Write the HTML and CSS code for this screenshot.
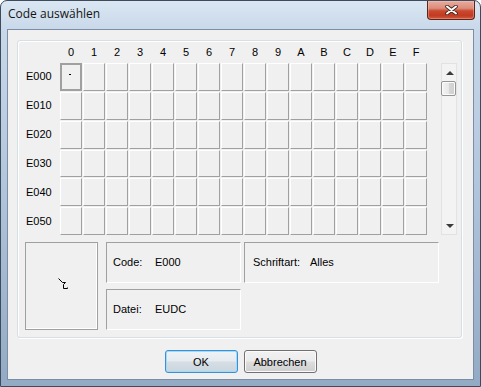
FILE: index.html
```html
<!DOCTYPE html>
<html lang="de">
<head>
<meta charset="utf-8">
<title>Code auswählen</title>
<link rel="stylesheet" href="styles.css">
</head>
<body>
<div class="window">
  <div class="titlebar">
    <span class="title">Code auswählen</span>
    <div class="close">
      <svg width="13" height="10" viewBox="0 0 13 10">
        <path d="M2 1.5 L11 8.5 M11 1.5 L2 8.5" stroke="#3b2620" stroke-width="3.6" stroke-linecap="round" fill="none"/>
        <path d="M2 1.5 L11 8.5 M11 1.5 L2 8.5" stroke="#ffffff" stroke-width="2" stroke-linecap="round" fill="none"/>
      </svg>
    </div>
  </div>
  <div class="client">
    <div class="group">
      <div class="chart">
        <div class="colhead">
          <span>0</span><span>1</span><span>2</span><span>3</span><span>4</span><span>5</span><span>6</span><span>7</span>
          <span>8</span><span>9</span><span>A</span><span>B</span><span>C</span><span>D</span><span>E</span><span>F</span>
        </div>
        <div class="rowhead">
          <span>E000</span><span>E010</span><span>E020</span><span>E030</span><span>E040</span><span>E050</span>
        </div>
        <div class="cells">
          <div class="cell sel"><i class="dot"></i></div><div class="cell"></div><div class="cell"></div><div class="cell"></div><div class="cell"></div><div class="cell"></div><div class="cell"></div><div class="cell"></div><div class="cell"></div><div class="cell"></div><div class="cell"></div><div class="cell"></div><div class="cell"></div><div class="cell"></div><div class="cell"></div><div class="cell"></div>
          <div class="cell"></div><div class="cell"></div><div class="cell"></div><div class="cell"></div><div class="cell"></div><div class="cell"></div><div class="cell"></div><div class="cell"></div><div class="cell"></div><div class="cell"></div><div class="cell"></div><div class="cell"></div><div class="cell"></div><div class="cell"></div><div class="cell"></div><div class="cell"></div>
          <div class="cell"></div><div class="cell"></div><div class="cell"></div><div class="cell"></div><div class="cell"></div><div class="cell"></div><div class="cell"></div><div class="cell"></div><div class="cell"></div><div class="cell"></div><div class="cell"></div><div class="cell"></div><div class="cell"></div><div class="cell"></div><div class="cell"></div><div class="cell"></div>
          <div class="cell"></div><div class="cell"></div><div class="cell"></div><div class="cell"></div><div class="cell"></div><div class="cell"></div><div class="cell"></div><div class="cell"></div><div class="cell"></div><div class="cell"></div><div class="cell"></div><div class="cell"></div><div class="cell"></div><div class="cell"></div><div class="cell"></div><div class="cell"></div>
          <div class="cell"></div><div class="cell"></div><div class="cell"></div><div class="cell"></div><div class="cell"></div><div class="cell"></div><div class="cell"></div><div class="cell"></div><div class="cell"></div><div class="cell"></div><div class="cell"></div><div class="cell"></div><div class="cell"></div><div class="cell"></div><div class="cell"></div><div class="cell"></div>
          <div class="cell"></div><div class="cell"></div><div class="cell"></div><div class="cell"></div><div class="cell"></div><div class="cell"></div><div class="cell"></div><div class="cell"></div><div class="cell"></div><div class="cell"></div><div class="cell"></div><div class="cell"></div><div class="cell"></div><div class="cell"></div><div class="cell"></div><div class="cell"></div>
        </div>
        <div class="scrollbar">
          <div class="sb-btn"><i class="tri-up"></i></div>
          <div class="thumb"></div>
          <div class="sb-btn sb-down"><i class="tri-down"></i></div>
        </div>
      </div>
      <div class="info">
        <div class="preview">
          <svg width="12" height="13" viewBox="0 0 12 13">
            <polyline points="1.5,1.5 5.5,5.5 8.5,5.5 6.5,7.5 6.5,11.5 10.5,11.5 10.5,10.5" fill="none" stroke="#000" stroke-width="1"/>
          </svg>
        </div>
        <div class="fields">
          <div class="field"><span class="lbl lbl-code">Code:</span><span>E000</span></div>
          <div class="field"><span class="lbl lbl-code">Datei:</span><span>EUDC</span></div>
        </div>
        <div class="field field-font"><span class="lbl lbl-font">Schriftart:</span><span>Alles</span></div>
      </div>
    </div>
    <div class="buttons">
      <button class="btn btn-default">OK</button>
      <button class="btn">Abbrechen</button>
    </div>
  </div>
</div>
</body>
</html>
```
FILE: styles.css
```css
* { box-sizing: border-box; }
html, body { margin: 0; padding: 0; }
body {
  width: 481px;
  height: 387px;
  overflow: hidden;
  background: #ffffff;
  font-family: "Liberation Sans", Arial, sans-serif;
  font-size: 11px;
  color: #000;
}
.window {
  width: 481px;
  height: 387px;
  border: 1px solid #3d4b5c;
  border-radius: 7px 7px 0 0;
  background: linear-gradient(180deg, #dae6f2 0px, #c8d8ea 30px, #b3c7dd 170px, #93aac4 387px);
  padding: 0 6px 6px;
  display: flex;
  flex-direction: column;
}
.titlebar {
  height: 28px;
  display: flex;
  align-items: flex-start;
}
.title {
  font-family: "Open Sans", "Noto Sans", sans-serif;
  font-size: 12px;
  line-height: 16px;
  margin: 5px 0 0 1px;
  color: #151515;
}
.close {
  margin-left: auto;
  margin-right: -1px;
  width: 48px;
  height: 19px;
  border: 1px solid #5e2419;
  border-top: none;
  border-radius: 0 0 4px 4px;
  background: linear-gradient(180deg, #e8ab9d 0%, #dc8d7b 40%, #c9492f 55%, #c23b22 80%, #d0583c 100%);
  box-shadow: inset 0 0 0 1px rgba(255, 210, 200, 0.35);
  display: flex;
  align-items: center;
  justify-content: center;
}
.client {
  flex: 1;
  border: 1px solid #7d8ea4;
  background: #f0f0f0;
  display: flex;
  flex-direction: column;
}
.group {
  margin: 10px 11px 0 9px;
  height: 298px;
  border: 1px solid #d5dfe5;
  border-radius: 3px;
  box-shadow: inset 1px 1px 0 #ffffff, 1px 1px 0 #ffffff;
  padding: 0 0 0 7px;
}
.chart {
  display: grid;
  grid-template-columns: 35px 367px 14px 16px;
  grid-template-rows: 22px 172px;
}
.colhead {
  grid-column: 2;
  grid-row: 1;
  display: grid;
  grid-template-columns: repeat(16, 22px);
  column-gap: 1px;
  text-align: center;
  padding-top: 5px;
  line-height: 13px;
}
.rowhead {
  grid-column: 1;
  grid-row: 2;
  display: grid;
  grid-template-rows: repeat(6, 1fr);
  row-gap: 1px;
  align-items: center;
  padding-left: 1px;
  line-height: 13px;
}
.cells {
  grid-column: 2;
  grid-row: 2;
  display: grid;
  grid-template-columns: repeat(16, 22px);
  grid-template-rows: repeat(6, 1fr);
  gap: 1px;
}
.cell {
  border-top: 1px solid #ffffff;
  border-left: 1px solid #ffffff;
  border-right: 1px solid #a0a0a0;
  border-bottom: 1px solid #a0a0a0;
}
.cell.sel {
  border: 2px solid #a0a0a0;
  display: flex;
  align-items: center;
  justify-content: center;
}
.dot {
  display: block;
  width: 2px;
  height: 1px;
  background: #000;
  margin: 0 2px 4px 0;
}
.scrollbar {
  grid-column: 4;
  grid-row: 2;
  border: 1px solid #e2e2e2;
  background: #f3f3f3;
  display: flex;
  flex-direction: column;
}
.sb-btn {
  height: 17px;
  display: flex;
  align-items: center;
  justify-content: center;
}
.sb-down { margin-top: auto; }
.tri-up {
  width: 0;
  height: 0;
  border-left: 4px solid transparent;
  border-right: 4px solid transparent;
  border-bottom: 4px solid #3a3a3a;
  margin-left: 1px;
}
.tri-down {
  width: 0;
  height: 0;
  border-left: 4px solid transparent;
  border-right: 4px solid transparent;
  border-top: 4px solid #3a3a3a;
  margin-left: 1px;
}
.thumb {
  width: 15px;
  height: 15px;
  margin-left: -1px;
  border: 1px solid #959595;
  border-radius: 2px;
  background: linear-gradient(90deg, #f4f4f4 0%, #e8e8e8 50%, #d6d6d6 55%, #cfcfcf 100%);
  box-shadow: inset 0 0 0 1px #fbfbfb;
}
.info {
  display: flex;
  align-items: flex-start;
  margin-top: 7px;
}
.preview {
  width: 73px;
  height: 88px;
  border: 1px solid #a0a0a0;
  box-shadow: inset -1px -1px 0 #ffffff;
  display: flex;
  align-items: center;
  justify-content: center;
  padding: 0 0 6px 2px;
}
.fields {
  margin-left: 8px;
  display: flex;
  flex-direction: column;
  gap: 6px;
}
.field {
  width: 135px;
  height: 41px;
  border-top: 1px solid #a0a0a0;
  border-left: 1px solid #a0a0a0;
  border-right: 1px solid #ffffff;
  border-bottom: 1px solid #ffffff;
  display: flex;
  align-items: center;
  padding-left: 6px;
  line-height: 13px;
}
.field-font {
  width: 195px;
  margin-left: 3px;
  padding-left: 8px;
}
.lbl-code { width: 42px; }
.lbl-font { width: 57px; }
.buttons {
  display: flex;
  justify-content: center;
  gap: 6px;
  margin-top: 12px;
}
.btn {
  width: 73px;
  height: 23px;
  padding: 0;
  font-family: "Liberation Sans", Arial, sans-serif;
  font-size: 11px;
  color: #000;
  border: 1px solid #707070;
  border-radius: 3px;
  background: linear-gradient(180deg, #f2f2f2 0%, #ebebeb 48%, #dddddd 52%, #cfcfcf 100%);
  box-shadow: inset 0 0 0 1px #fbfbfb;
}
.btn-default {
  border-color: #3c8fd3;
  background: linear-gradient(180deg, #eef3f7 0%, #e5ebf0 48%, #d6dee5 52%, #cbd5dd 100%);
  box-shadow: inset 0 0 0 1px #9fdcf7;
}
```
